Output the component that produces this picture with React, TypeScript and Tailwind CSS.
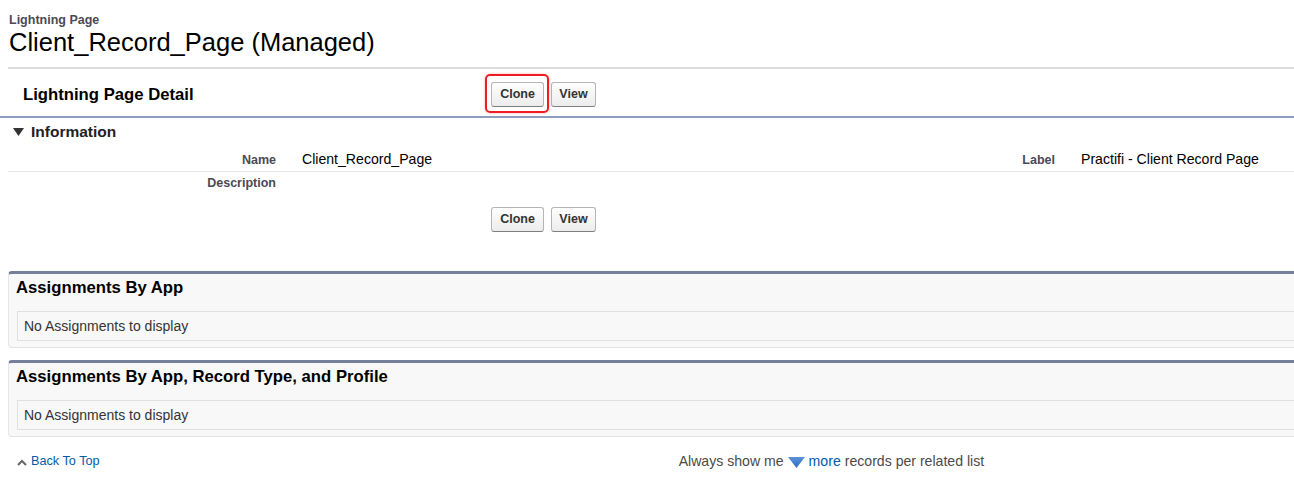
import React from "react";

function Btn({ children, w }: { children: React.ReactNode; w: string }) {
  return (
    <button
      className={`${w} h-[25px] rounded-[3px] border border-[#b5b5b5] border-b-[#7f7f7f] bg-gradient-to-b from-[#ffffff] to-[#ececec] text-[12.5px] font-bold leading-none text-[#333]`}
    >
      {children}
    </button>
  );
}

function Buttons({ highlight }: { highlight?: boolean }) {
  return (
    <div className="flex items-center gap-[7px]">
      <span className="relative flex">
        {highlight && (
          <span className="pointer-events-none absolute left-[-6px] right-[-5px] top-[-8px] bottom-[-6px] rounded-[5px] border-2 border-[#ee1c25] shadow-[0_0_3px_rgba(238,28,37,0.35)]" />
        )}
        <Btn w="w-[53px]">Clone</Btn>
      </span>
      <Btn w="w-[45px]">View</Btn>
    </div>
  );
}

function Section({ title }: { title: string }) {
  return (
    <div className="ml-[8px] mr-[-12px] rounded-[4px] border-t-[3px] border-l border-b border-t-[#747f99] border-l-[#e6e6e6] border-b-[#e3e3e3] bg-[#f8f8f8]">
      <div className="h-[37px] pl-[7px] pt-[4px] text-[16.7px] font-bold leading-[20px] text-[#000]">
        {title}
      </div>
      <div className="ml-[8px] flex h-[30px] items-center border border-[#e0e0e0] bg-[#f8f8f8] pl-[6px] text-[14px] text-[#333]">
        No Assignments to display
      </div>
      <div className="h-[6px]" />
    </div>
  );
}

export default function App() {
  return (
    <div className="h-[496px] w-[1294px] overflow-hidden bg-white font-['Liberation_Sans',Arial,sans-serif] text-[#000]">
      {/* Header */}
      <div className="pl-[9px] pt-[13px]">
        <div className="h-[14px] text-[12.5px] font-bold leading-[14px] text-[#4a4a56]">
          Lightning Page
        </div>
        <div className="h-[30px] text-[25.5px] leading-[30px] text-[#000]">
          Client_Record_Page (Managed)
        </div>
      </div>

      {/* Detail block */}
      <div className="mt-[10px] ml-[8px] h-[2px] bg-[#dcdcdc]" />
      <div className="ml-[8px] flex h-[47px] items-center pt-[4px]">
        <div className="w-[483px] pl-[15px] text-[16.7px] font-bold text-[#000]">
          Lightning Page Detail
        </div>
        <Buttons highlight />
      </div>
      <div className="h-[2px] bg-[#8e9cbd]" />

      {/* Information */}
      <div className="flex h-[26px] items-center pl-[13px] pt-[1px]">
        <svg width="11" height="8" viewBox="0 0 11 8" className="mr-[7px]">
          <polygon points="0,0 11,0 5.5,8" fill="#333" />
        </svg>
        <span className="text-[15.5px] font-bold text-[#222]">Information</span>
      </div>

      <div className="ml-[8px] mt-[5px] grid grid-cols-[274px_505px_274px_1fr] text-[14.1px]">
        <div className="flex h-[23px] items-center justify-end border-b border-[#e6e6e6] pr-[6px] text-[12.5px] font-bold text-[#4a4a56]">
          Name
        </div>
        <div className="flex h-[23px] items-center border-b border-[#e6e6e6] pl-[20px] text-[#000]">
          Client_Record_Page
        </div>
        <div className="flex h-[23px] items-center justify-end border-b border-[#e6e6e6] pr-[6px] text-[12.5px] font-bold text-[#4a4a56]">
          Label
        </div>
        <div className="flex h-[23px] items-center border-b border-[#e6e6e6] pl-[20px] text-[#000]">
          Practifi - Client Record Page
        </div>
        <div className="flex h-[22px] items-center justify-end pr-[6px] text-[12.5px] font-bold text-[#4a4a56]">
          Description
        </div>
        <div className="h-[22px]" />
        <div className="h-[22px]" />
        <div className="h-[22px]" />
      </div>

      <div className="mt-[13px] flex pl-[491px]">
        <Buttons />
      </div>

      <div className="mt-[39px]">
        <Section title="Assignments By App" />
      </div>
      <div className="mt-[12px]">
        <Section title="Assignments By App, Record Type, and Profile" />
      </div>

      {/* Footer */}
      <div className="mt-[17px] flex h-[16px] items-center">
        <div className="flex items-center pl-[17px]">
          <svg width="10" height="7" viewBox="0 0 10 7" className="mr-[4px]">
            <polyline points="1,6 5,2 9,6" fill="none" stroke="#666" strokeWidth="2" />
          </svg>
          <span className="text-[12.7px] text-[#015ba7]">Back To Top</span>
        </div>
        <div className="ml-[579px] flex items-center text-[14.1px] text-[#4a4a4a]">
          <span>Always show me</span>
          <svg width="17" height="11" viewBox="0 0 17 11" className="mx-[4px]">
            <defs>
              <linearGradient id="mg" x1="0" y1="0" x2="0" y2="1">
                <stop offset="0" stopColor="#5c93d8" />
                <stop offset="1" stopColor="#2a6bc4" />
              </linearGradient>
            </defs>
            <polygon points="0,0 17,0 8.5,11" fill="url(#mg)" />
          </svg>
          <span className="text-[#015ba7]">more</span>
          <span className="ml-[4px]">records per related list</span>
        </div>
      </div>
    </div>
  );
}
